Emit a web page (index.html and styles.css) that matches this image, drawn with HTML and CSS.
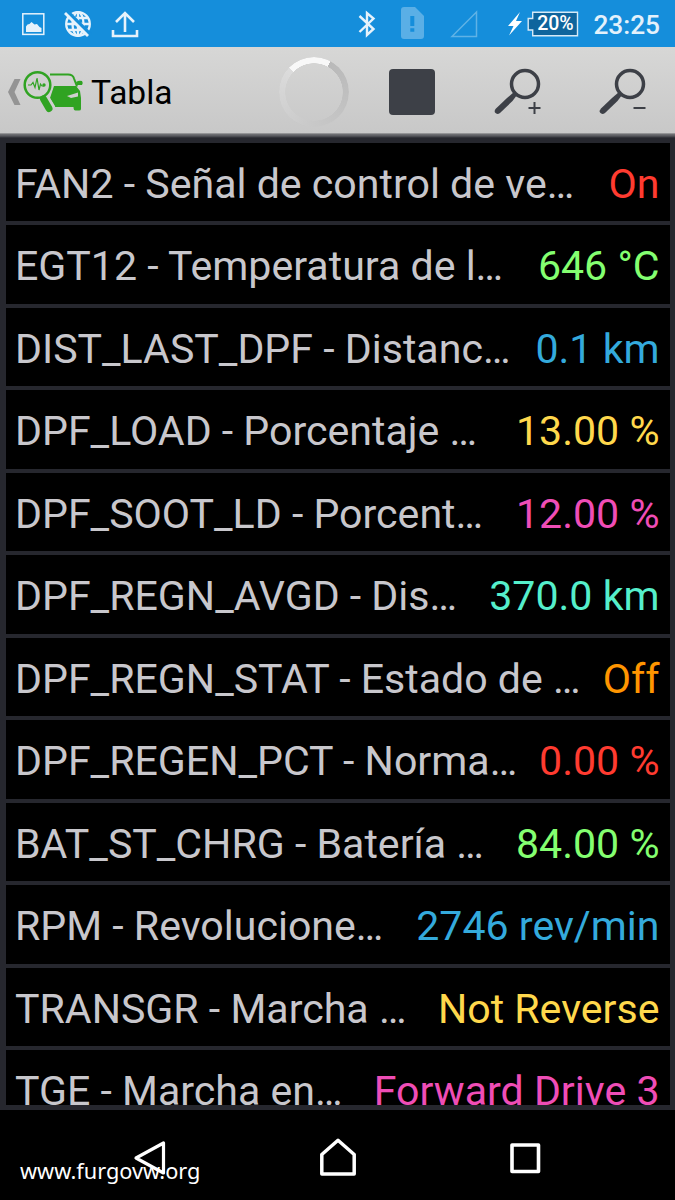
FILE: index.html
```html
<!DOCTYPE html>
<html lang="es">
<head>
  <meta charset="UTF-8">
  <meta name="viewport" content="width=device-width, initial-scale=1.0">
  <title>Tabla</title>
  <link rel="stylesheet" href="styles.css">
</head>
<body>
  <div class="screen">
    <div class="status-bar">
      <div class="notifications">
        <svg width="24" height="24" viewBox="0 0 24 24">
          <rect x="1.8" y="1.8" width="21" height="20.6" fill="none" stroke="#e6f2fb" stroke-width="1.5"/>
          <path d="M5 20V14.500l1.500-2 2-.5 2-2 3 2.500 2.500-.5 2.500 3 2 1V20z" fill="#e6f2fb"/>
        </svg>
        <svg width="28" height="28" viewBox="0 0 28 28">
          <g fill="none" stroke="#e6f2fb" stroke-width="2.300">
            <circle cx="14" cy="14" r="11.8"/>
            <ellipse cx="14" cy="14" rx="5.5" ry="11.8"/>
            <path d="M14 2v24M2.500 14h23M4.500 8h19M4.500 20h19"/>
          </g>
          <path d="M4 2l23 23" stroke="#158edb" stroke-width="3.500"/>
          <path d="M1 3l23 23" stroke="#e6f2fb" stroke-width="2.800"/>
        </svg>
        <svg width="28" height="28" viewBox="0 0 28 28">
          <path d="M2 20v6h24v-6M14 22V3M5 12l9-9 9 9" fill="none" stroke="#e6f2fb" stroke-width="2.6"/>
        </svg>
      </div>
      <div class="system">
        <svg class="bluetooth" width="18" height="28" viewBox="0 0 18 28">
          <path d="M1.500 6l14 13-6.500 6V3l6.500 5.500L1.500 22" fill="none" stroke="#e6f2fb" stroke-width="2.4"/>
        </svg>
        <svg class="sim" width="23" height="33" viewBox="0 0 23 33">
          <path d="M3 0h11l9 9v20q0 3-3 3H3q-3 0-3-3V3q0-3 3-3z" fill="#5aafe6"/>
          <path d="M11.300 9v10M11.300 21.300v3.500" stroke="#158edb" stroke-width="4"/>
        </svg>
        <svg class="signal" width="28" height="28" viewBox="0 0 28 28">
          <path d="M2 26.500H26.500V2z" fill="none" stroke="#5fb2e6" stroke-width="1.500"/>
        </svg>
        <svg class="bolt" width="14" height="24" viewBox="0 0 14 24">
          <path d="M12 0L0 14h5.500L1 23.500 14 9H8z" fill="#fff"/>
        </svg>
        <div class="battery">
          <svg width="52" height="26" viewBox="0 0 52 26">
            <path d="M5.700 1.200h44.800v23.600H5.700V19H1.200V7.500h4.500z" fill="#0f659d" stroke="#d6e9f6" stroke-width="1.400"/>
          </svg>
          <span class="battery-level">20%</span>
        </div>
        <span class="clock">23:25</span>
      </div>
    </div>

    <div class="action-bar">
      <svg class="back" width="14" height="28" viewBox="0 0 14 28">
        <path d="M6.500 1h6L6.500 14l6 13h-6L0 14z" fill="#949494"/>
      </svg>
      <svg class="logo" width="61" height="44" viewBox="0 0 61 44">
        <g fill="#30a322">
          <path d="M31 16h22l4 5 1 7v11q0 1.500-2 1.500h-3.500q-2 0-2-3.500H32l-5-9z"/>
          <path d="M53 12q3-2 6-1 1.500 2 0 4h-5z"/>
        </g>
        <path d="M27 4.500h18q5 0 6 4l3 8" fill="none" stroke="#30a322" stroke-width="2"/>
        <path d="M44 26l11-3.500v4l-7 1.500z" fill="#cfcfce"/>
        <path d="M20 26l8 13" stroke="#cfcfce" stroke-width="10"/>
        <circle cx="14.500" cy="15" r="15.500" fill="#d0d0cf"/>
        <circle cx="14.500" cy="15" r="12.800" fill="none" stroke="#30a322" stroke-width="2.500"/>
        <path d="M20.500 29l5.500 9.500" stroke="#30a322" stroke-width="7" stroke-linecap="round"/>
        <path d="M5 15h3l2-2.500 2 5 2-9.500 2 12 1.500-6 1.500 2h2" fill="none" stroke="#30a322" stroke-width="1.200"/>
        <circle cx="21" cy="15" r="1.700" fill="#30a322"/>
      </svg>
      <h1 class="title">Tabla</h1>
      <div class="actions">
        <div class="spinner"></div>
        <div class="stop"></div>
        <svg class="zoom-in" width="48" height="48" viewBox="0 0 48 48">
          <circle cx="31" cy="16" r="13.500" fill="none" stroke="#3d4047" stroke-width="3.500"/>
          <path d="M20 24l3 3-4.500 6L6 45q-3 2-5-.5-1-2 1-4L13 30z" fill="#3d4047"/>
          <path d="M40.500 34v12M34.500 40h12" stroke="#3d4047" stroke-width="2"/>
        </svg>
        <svg class="zoom-out" width="48" height="48" viewBox="0 0 48 48">
          <circle cx="31" cy="16" r="13.500" fill="none" stroke="#3d4047" stroke-width="3.500"/>
          <path d="M20 24l3 3-4.500 6L6 45q-3 2-5-.5-1-2 1-4L13 30z" fill="#3d4047"/>
          <path d="M34.500 40h12" stroke="#3d4047" stroke-width="2"/>
        </svg>
      </div>
    </div>

    <div class="table">
      <div class="rows">
        <div class="row"><span>FAN2 - Señal de control de ve…</span><span class="value red">On</span></div>
        <div class="row"><span>EGT12 - Temperatura de l…</span><span class="value green">646 °C</span></div>
        <div class="row"><span>DIST_LAST_DPF - Distanc…</span><span class="value blue">0.1 km</span></div>
        <div class="row"><span>DPF_LOAD - Porcentaje …</span><span class="value yellow">13.00 %</span></div>
        <div class="row"><span>DPF_SOOT_LD - Porcent…</span><span class="value pink">12.00 %</span></div>
        <div class="row"><span>DPF_REGN_AVGD - Dis…</span><span class="value teal">370.0 km</span></div>
        <div class="row"><span>DPF_REGN_STAT - Estado de …</span><span class="value orange">Off</span></div>
        <div class="row"><span>DPF_REGEN_PCT - Norma…</span><span class="value red">0.00 %</span></div>
        <div class="row"><span>BAT_ST_CHRG - Batería …</span><span class="value green">84.00 %</span></div>
        <div class="row"><span>RPM - Revolucione…</span><span class="value blue">2746 rev/min</span></div>
        <div class="row"><span>TRANSGR - Marcha …</span><span class="value yellow">Not Reverse</span></div>
        <div class="row"><span>TGE - Marcha en…</span><span class="value pink">Forward Drive 3</span></div>
      </div>
    </div>

    <div class="nav-bar">
      <svg width="40" height="40" viewBox="0 0 40 40">
        <path d="M33.500 5v30L6 20z" fill="none" stroke="#fff" stroke-width="3.200" stroke-linejoin="round"/>
      </svg>
      <svg width="40" height="40" viewBox="0 0 40 40">
        <path d="M3.800 36V16.500L20 2.300l16.200 14.200V36z" fill="none" stroke="#fff" stroke-width="3.500" stroke-linejoin="round"/>
      </svg>
      <svg width="40" height="40" viewBox="0 0 40 40">
        <rect x="7" y="7" width="26.500" height="26.500" fill="none" stroke="#fff" stroke-width="3.600" stroke-linejoin="round"/>
      </svg>
    </div>
    <div class="watermark">www.furgovw.org</div>
  </div>
</body>
</html>
```
FILE: styles.css
```css
body {
  margin: 0;
  background-color: #000;
  font-family: Roboto, "Noto Sans", sans-serif;
}
svg {
  display: block;
  flex: none;
}
.screen {
  position: relative;
  width: 675px;
  height: 1200px;
  overflow: hidden;
  display: flex;
  flex-direction: column;
}
.status-bar {
  flex: none;
  height: 47px;
  background-color: #158edb;
  display: flex;
  align-items: center;
  justify-content: space-between;
  box-sizing: border-box;
  padding: 0 15px 0 21px;
}
.notifications, .system {
  display: flex;
  align-items: center;
}
.notifications {
  gap: 19px;
}
.bluetooth {
  margin-right: 25px;
}
.sim {
  margin-right: 26px;
}
.signal {
  margin-right: 30px;
}
.bolt {
  margin-right: 5px;
}
.battery {
  position: relative;
  margin-right: 14px;
}
.battery-level {
  position: absolute;
  left: 5px;
  width: 46px;
  top: 0;
  line-height: 26px;
  text-align: center;
  font-size: 19.500px;
  font-weight: 500;
  color: #fff;
}
.clock {
  font-size: 26.250px;
  line-height: 47px;
  padding-top: 3px;
  font-weight: 500;
  color: #e3f1fb;
}
.action-bar {
  flex: none;
  height: 86px;
  background: linear-gradient(#d7d7d6, #c8c8c8);
  display: flex;
  align-items: center;
  box-sizing: border-box;
  padding: 4px 28px 0 8px;
}
.back {
  margin-right: 1px;
}
.title {
  margin: 2px 0 0 7px;
  font-size: 33.500px;
  font-weight: 400;
  line-height: 40px;
  color: #000;
}
.actions {
  margin-left: auto;
  display: flex;
  align-items: center;
}
.spinner {
  width: 70px;
  height: 70px;
  border-radius: 50%;
  background: conic-gradient(#f8f8f8 0 28deg, #b9b9b9 28deg, #c8c8c8 180deg, #dcdcdc 315deg, #f8f8f8 315deg);
  -webkit-mask: radial-gradient(circle, transparent 28.500px, #000 29px);
  mask: radial-gradient(circle, transparent 28.500px, #000 29px);
  margin-right: 40px;
}
.stop {
  width: 46px;
  height: 46px;
  border-radius: 4px;
  background-color: #3d4047;
  margin-right: 59px;
}
.zoom-in {
  margin-right: 57px;
}
.table {
  flex: none;
  height: 977px;
  box-sizing: border-box;
  padding: 9.500px 5.500px 5px 6px;
  background: linear-gradient(#b4b4b5 0, #737477 1px, #56575c 3px, #26272e 5px);
}
.rows {
  height: 962px;
  overflow: hidden;
  display: flex;
  flex-direction: column;
  gap: 4px;
}
.row {
  flex: none;
  height: 78.500px;
  box-sizing: border-box;
  padding: 4px 10px 0 9px;
  display: flex;
  align-items: center;
  justify-content: space-between;
  background-color: #000;
  color: #c8c7cc;
  font-size: 41.100px;
  white-space: nowrap;
}
.red { color: #ff3b30; }
.green { color: #84ff70; }
.blue { color: #34aadc; }
.yellow { color: #ffd84c; }
.pink { color: #ef4db6; }
.teal { color: #55efcb; }
.orange { color: #ff9500; }
.nav-bar {
  flex: none;
  box-sizing: border-box;
  height: 90px;
  display: flex;
  align-items: center;
  justify-content: center;
  gap: 147.500px;
  padding-top: 6px;
}
.watermark {
  position: absolute;
  left: 20px;
  top: 1157px;
  font-family: "Noto Sans", sans-serif;
  font-size: 21.750px;
  line-height: 28px;
  color: #fff;
}
```
